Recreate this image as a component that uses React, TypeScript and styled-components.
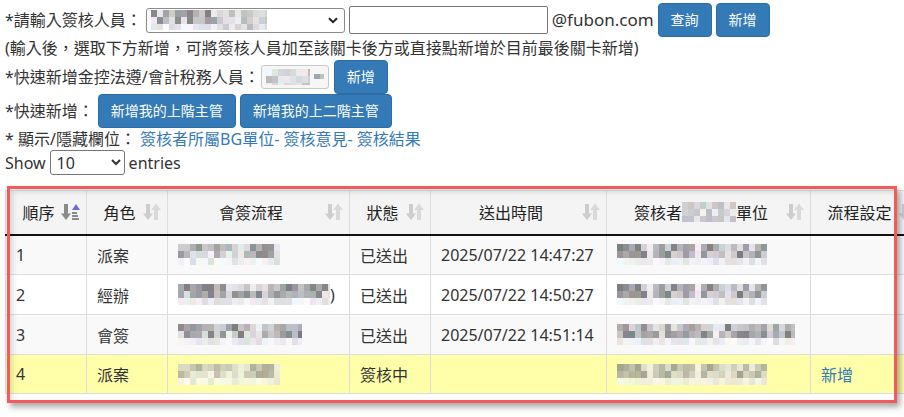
import React from 'react';
import styled, { createGlobalStyle } from 'styled-components';

const GlobalStyle = createGlobalStyle`
  html, body { margin: 0; padding: 0; background: #fff; }
  body {
    font-family: "Noto Sans", "Noto Sans CJK TC", sans-serif;
    font-size: 16px;
    color: #333;
  }
`;

const Page = styled.div`
  box-sizing: border-box;
  width: 904px;
  height: 417px;
  padding: 3px 0 0 5px;
  overflow: hidden;
`;

const Line = styled.div<{ $h: number; $gap?: number }>`
  display: flex;
  align-items: center;
  gap: ${(p) => p.$gap ?? 5}px;
  height: ${(p) => p.$h}px;
  white-space: nowrap;
`;

const Label = styled.span`
  line-height: 22px;
`;

const Domain = styled.span`
  line-height: 22px;
  font-size: 17px;
`;

const FakeSelect = styled.div<{ $w: number; $h: number }>`
  box-sizing: border-box;
  width: ${(p) => p.$w}px;
  height: ${(p) => p.$h}px;
  border: 1px solid #8a8a8a;
  border-radius: 3px;
  background: #fff;
  display: flex;
  align-items: center;
  padding: 0 6px 0 4px;
  gap: 4px;
`;

const MiniSelect = styled.div`
  box-sizing: border-box;
  width: 68px;
  height: 24px;
  border: 1px solid #c8c8c8;
  border-radius: 3px;
  background: #f6f6f6;
  display: flex;
  align-items: center;
  padding: 0 4px;
  gap: 4px;
`;

const Grow = styled.div`
  flex: 1;
  display: flex;
  align-items: center;
`;

const TextInput = styled.input`
  box-sizing: border-box;
  width: 199px;
  height: 28px;
  border: 1px solid #767676;
  border-radius: 2px;
  margin: 0;
  padding: 1px 4px;
  font-size: 16px;
`;

const Button = styled.button`
  box-sizing: border-box;
  height: 34px;
  padding: 6px 12px;
  font-family: "Noto Sans", "Noto Sans CJK TC", sans-serif;
  font-size: 14px;
  line-height: 20px;
  color: #fff;
  background: #337ab7;
  border: 1px solid #2e6da4;
  border-radius: 4px;
  cursor: pointer;
  white-space: nowrap;
`;

const Link = styled.a`
  color: #337ab7;
  text-decoration: none;
  cursor: pointer;
`;

const NativeSelect = styled.select`
  box-sizing: border-box;
  width: 75px;
  height: 25px;
  font-family: "Noto Sans", sans-serif;
  font-size: 16px;
  border: 1px solid #767676;
  border-radius: 3px;
  background: #fff;
  color: #333;
  padding: 0 2px;
  margin: 0;
`;

const TableWrap = styled.div`
  position: relative;
  margin-top: 15px;
  width: 918px;
`;

const Table = styled.table`
  border-collapse: collapse;
  table-layout: fixed;
  width: 918px;
  border-top: 1px solid #ddd;
`;

const HeadRow = styled.tr`
  height: 44px;
  background: #f4f4f4;
`;

const Th = styled.th`
  border-left: 1px solid #ddd;
  border-right: 1px solid #ddd;
  border-bottom: 2px solid #111;
  padding: 0 5px 0 10px;
  font-weight: normal;
  color: #222;
  font-size: 16px;
`;

const ThInner = styled.div`
  display: flex;
  align-items: center;
`;

const ThText = styled.span`
  flex: 1;
  display: flex;
  justify-content: center;
  align-items: center;
  white-space: nowrap;
`;

const BodyRow = styled.tr<{ $bg: string; $h: number }>`
  height: ${(p) => p.$h}px;
  background: ${(p) => p.$bg};
`;

const Td = styled.td`
  border: 1px solid #ddd;
  padding: 0 10px;
  color: #333;
  white-space: nowrap;
  overflow: hidden;
`;

const CellFlex = styled.div`
  display: flex;
  align-items: center;
`;

const Highlight = styled.div`
  position: absolute;
  left: 2px;
  top: -4px;
  width: 890px;
  height: 217px;
  box-sizing: border-box;
  border: 3px solid #f35a5a;
  box-shadow: 3px 4px 6px rgba(0, 0, 0, 0.35), inset 3px 3px 5px rgba(0, 0, 0, 0.12);
  pointer-events: none;
`;

function rng(seed: number) {
  let s = seed * 7919 + 17;
  return () => {
    s = (s * 9301 + 49297) % 233280;
    return s / 233280;
  };
}

const Mosaic: React.FC<{ w: number; h?: number; seed?: number; alpha?: number; light?: boolean }> = ({
  w,
  h = 21,
  seed = 1,
  alpha = 1,
  light = false,
}) => {
  const r = rng(seed);
  const cw = 6;
  const ch = 7;
  const cols = Math.ceil(w / cw);
  const rows = Math.ceil(h / ch);
  const rects: React.ReactNode[] = [];
  for (let y = 0; y < rows; y++) {
    for (let x = 0; x < cols; x++) {
      const lastRow = y === rows - 1 && rows > 2;
      let g = light ? 185 + r() * 60 : lastRow ? 222 + r() * 30 : 125 + r() * 115;
      g = Math.min(248, g);
      const rr = Math.round(g + (r() - 0.5) * 16);
      const gg = Math.round(g + (r() - 0.5) * 10);
      const bb = Math.round(g + (r() - 0.35) * 18);
      rects.push(
        <rect
          key={`${x}-${y}`}
          x={x * cw}
          y={y * ch}
          width={cw + 0.3}
          height={ch}
          fill={`rgb(${rr},${gg},${bb})`}
          opacity={alpha}
        />
      );
    }
  }
  return (
    <svg width={w} height={h} viewBox={`0 0 ${w} ${h}`} style={{ display: 'block', flexShrink: 0 }}>
      {rects}
    </svg>
  );
};

const SortBoth = () => (
  <svg width="20" height="20" viewBox="0 0 20 20" style={{ flexShrink: 0 }}>
    <rect x="4" y="2" width="4" height="11" fill="#cdcdcd" />
    <path d="M1 11.5 H11 L6 18 Z" fill="#cdcdcd" />
    <path d="M9 8 H19 L14 1.5 Z" fill="#d9d9d9" />
    <rect x="12" y="7" width="4" height="11" fill="#d9d9d9" />
  </svg>
);

const SortAsc = () => (
  <svg width="20" height="20" viewBox="0 0 20 20" style={{ flexShrink: 0 }}>
    <rect x="3" y="2" width="4" height="11" fill="#8a8a8a" />
    <path d="M0 11.5 H10 L5 18 Z" fill="#8a8a8a" />
    <path d="M11 8 H19 L15 2 Z" fill="#6a6ad8" />
    <rect x="11" y="10" width="5" height="2" fill="#8a8a8a" />
    <rect x="11" y="13" width="6" height="2" fill="#8a8a8a" />
    <rect x="11" y="16" width="7" height="2" fill="#8a8a8a" />
  </svg>
);

const Chevron = () => (
  <svg width="10" height="7" viewBox="0 0 10 7" style={{ flexShrink: 0 }}>
    <path d="M1 1.2 L5 5.2 L9 1.2" stroke="#222" strokeWidth="2" fill="none" />
  </svg>
);

const headers = [
  { key: 'seq', label: '順序', asc: true },
  { key: 'role', label: '角色' },
  { key: 'flow', label: '會簽流程' },
  { key: 'status', label: '狀態' },
  { key: 'time', label: '送出時間' },
  { key: 'unit', label: 'unit' },
  { key: 'setting', label: '流程設定' },
];

const rows = [
  { seq: '1', role: '派案', flowW: 102, flowSuffix: '', status: '已送出', time: '2025/07/22 14:47:27', unitW: 150, link: false, bg: '#f9f9f9', h: 40 },
  { seq: '2', role: '經辦', flowW: 152, flowSuffix: ')', status: '已送出', time: '2025/07/22 14:50:27', unitW: 150, link: false, bg: '#ffffff', h: 40 },
  { seq: '3', role: '會簽', flowW: 124, flowSuffix: '', status: '已送出', time: '2025/07/22 14:51:14', unitW: 178, link: false, bg: '#f9f9f9', h: 40 },
  { seq: '4', role: '派案', flowW: 102, flowSuffix: '', status: '簽核中', time: '', unitW: 150, link: true, bg: '#ffffaa', h: 39 },
];

const colWidths = [81, 81, 182, 81, 176, 204, 113];

export default function App() {
  return (
    <>
      <GlobalStyle />
      <Page>
        <Line $h={34} $gap={4}>
          <Label>*請輸入簽核人員：</Label>
          <FakeSelect $w={199} $h={25}>
            <Grow>
              <Mosaic w={66} h={20} seed={3} />
              <Mosaic w={50} h={20} seed={5} light />
            </Grow>
            <Chevron />
          </FakeSelect>
          <TextInput type="text" />
          <Domain>@fubon.com</Domain>
          <Button>查詢</Button>
          <Button>新增</Button>
        </Line>
        <Line $h={22}>
          <Label>(輸入後，選取下方新增，可將簽核人員加至該關卡後方或直接點新增於目前最後關卡新增)</Label>
        </Line>
        <Line $h={35} $gap={1}>
          <Label>*快速新增金控法遵/會計稅務人員：</Label>
          <MiniSelect>
            <Grow>
              <Mosaic w={44} h={16} seed={11} light />
            </Grow>
            <Mosaic w={10} h={5} seed={2} />
          </MiniSelect>
          <Button style={{ marginLeft: 4 }}>新增</Button>
        </Line>
        <Line $h={34} $gap={4}>
          <Label>*快速新增：</Label>
          <Button>新增我的上階主管</Button>
          <Button>新增我的上二階主管</Button>
        </Line>
        <Line $h={22} $gap={0}>
          <Label>
            * 顯示/隱藏欄位： <Link>簽核者所屬BG單位-</Link> <Link>簽核意見-</Link> <Link>簽核結果</Link>
          </Label>
        </Line>
        <Line $h={25} $gap={4}>
          <Label>Show</Label>
          <NativeSelect defaultValue="10">
            <option value="10">10</option>
            <option value="25">25</option>
            <option value="50">50</option>
            <option value="100">100</option>
          </NativeSelect>
          <Label>entries</Label>
        </Line>

        <TableWrap>
          <Table>
            <colgroup>
              {colWidths.map((w, i) => (
                <col key={i} style={{ width: w }} />
              ))}
            </colgroup>
            <thead>
              <HeadRow>
                {headers.map((h) => (
                  <Th key={h.key}>
                    <ThInner>
                      <ThText>
                        {h.key === 'unit' ? (
                          <>
                            簽核者
                            <Mosaic w={54} h={20} seed={21} light />
                            單位
                          </>
                        ) : (
                          h.label
                        )}
                      </ThText>
                      {h.asc ? <SortAsc /> : <SortBoth />}
                    </ThInner>
                  </Th>
                ))}
              </HeadRow>
            </thead>
            <tbody>
              {rows.map((r, i) => (
                <BodyRow key={i} $bg={r.bg} $h={r.h}>
                  <Td>{r.seq}</Td>
                  <Td>{r.role}</Td>
                  <Td>
                    <CellFlex>
                      <Mosaic w={r.flowW} h={21} seed={i === 3 ? 31 : 31 + i} alpha={i === 3 ? 0.7 : 1} />
                      {r.flowSuffix}
                    </CellFlex>
                  </Td>
                  <Td>{r.status}</Td>
                  <Td>{r.time}</Td>
                  <Td>
                    <Mosaic w={r.unitW} h={21} seed={i === 2 ? 47 : 41} alpha={i === 3 ? 0.7 : 1} />
                  </Td>
                  <Td>{r.link ? <Link>新增</Link> : null}</Td>
                </BodyRow>
              ))}
            </tbody>
          </Table>
          <Highlight />
        </TableWrap>
      </Page>
    </>
  );
}
